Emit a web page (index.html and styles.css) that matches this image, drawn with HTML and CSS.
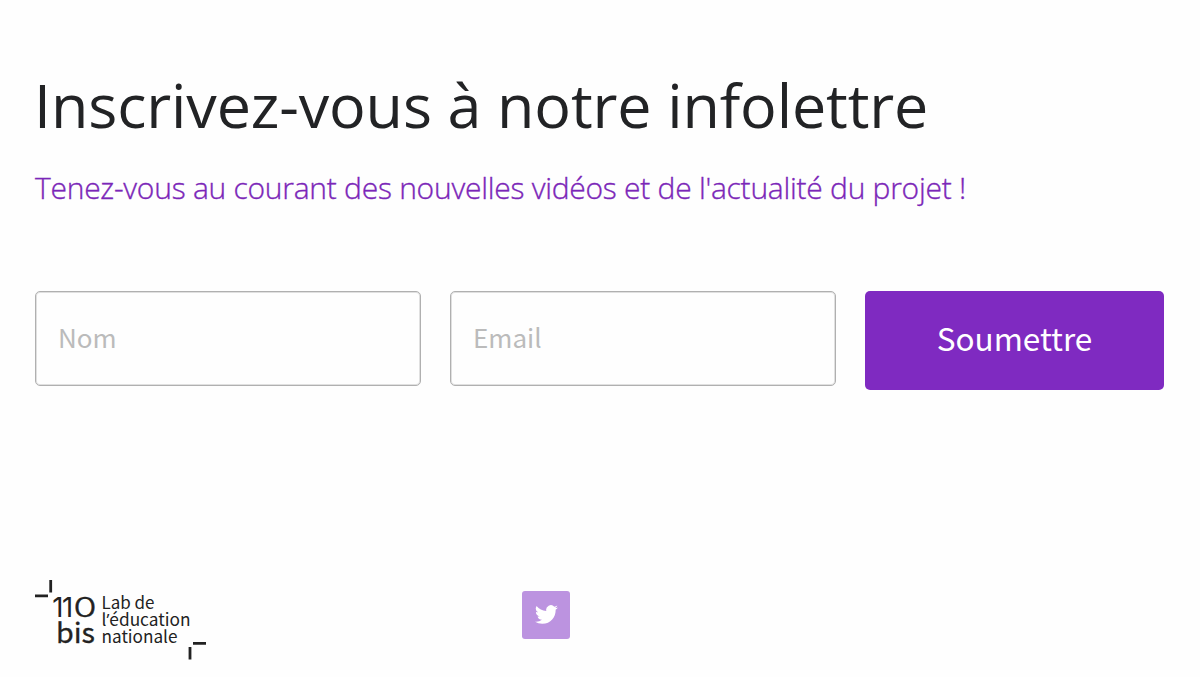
FILE: index.html
```html
<!DOCTYPE html>
<html lang="fr">

<head>
    <meta charset="UTF-8" />
    <title>Infolettre</title>
    <meta name="viewport" content="width=device-width, initial-scale=1.0" />
    <link rel="stylesheet" href="styles.css">
</head>

<body>
    <main class="newsletter">
        <h1>Inscrivez-vous à notre infolettre</h1>
        <p class="subtitle">Tenez-vous au courant des nouvelles vidéos et de l'actualité du projet&nbsp;!</p>

        <form class="signup-form">
            <input type="text" name="name" placeholder="Nom" aria-label="Nom" />
            <input type="email" name="email" placeholder="Email" aria-label="Email" />
            <button type="submit" class="submit-btn">Soumettre</button>
        </form>
    </main>

    <footer class="footer">
        <svg class="logo" viewBox="0 0 172 80" role="img" aria-label="110 bis, Lab de l’éducation nationale">
            <path d="M0 15.8h13M15.7 0v12.5M158 63.4h13M155 67v12.5" fill="none" stroke="#222" stroke-width="2.8" />
            <g class="logo-big">
                <text class="digits" x="17.3 27.1" y="37">11</text>
                <text class="digits zero" x="38.2" y="37" textLength="23.5" lengthAdjust="spacingAndGlyphs">0</text>
                <text x="21" y="62.5" textLength="39" lengthAdjust="spacingAndGlyphs">bis</text>
            </g>
            <g class="logo-small">
                <text x="66.5" y="28.5" textLength="53" lengthAdjust="spacingAndGlyphs">Lab de</text>
                <text x="66.5" y="45.5" textLength="89" lengthAdjust="spacingAndGlyphs">l<tspan class="apostrophe">’</tspan>éducation</text>
                <text x="66.5" y="62.5" textLength="76" lengthAdjust="spacingAndGlyphs">nationale</text>
            </g>
        </svg>
        <a class="social" href="#" aria-label="Twitter">
            <svg viewBox="0 0 24 24">
                <path d="M23.95 4.57a10 10 0 0 1-2.82.77 4.96 4.96 0 0 0 2.16-2.72c-.95.55-2 .95-3.13 1.18a4.92 4.92 0 0 0-8.38 4.48C7.69 8.1 4.07 6.13 1.64 3.16a4.92 4.92 0 0 0 1.52 6.57 4.9 4.9 0 0 1-2.23-.61v.06a4.92 4.92 0 0 0 3.95 4.83 5 5 0 0 1-2.21.08 4.94 4.94 0 0 0 4.6 3.42A9.87 9.87 0 0 1 0 19.54a14 14 0 0 0 7.55 2.21c9.05 0 14-7.5 14-13.98 0-.21 0-.42-.02-.63a9.94 9.94 0 0 0 2.46-2.55z" />
            </svg>
        </a>
    </footer>
</body>

</html>
```
FILE: styles.css
```css
body {
    margin: 0;
    padding: 67px 36px 0 35px;
    background: #fefefe;
    font-family: "Noto Sans CJK SC", sans-serif;
}

h1 {
    margin: 0 0 0 -1px;
    font-family: "Open Sans", sans-serif;
    font-size: 61px;
    font-weight: 400;
    line-height: 76px;
    letter-spacing: -0.13px;
    color: #222325;
    white-space: nowrap;
}

.subtitle {
    margin: 24px 0 0;
    font-family: "Open Sans", sans-serif;
    font-size: 30px;
    font-weight: 300;
    line-height: 42px;
    letter-spacing: -0.26px;
    color: #7b26b8;
    -webkit-text-stroke: 0.35px #7b26b8;
    white-space: nowrap;
}

.signup-form {
    display: flex;
    align-items: flex-start;
    gap: 29px;
    margin-top: 82px;
}

input {
    flex: 1;
    min-width: 0;
    height: 95px;
    padding: 0 23px 5px 22px;
    box-sizing: border-box;
    border: 1px solid #b0b0b0;
    border-radius: 5px;
    box-shadow: inset 0 0 0 1px #e0e0e0;
    background: #fefefe;
    font-family: inherit;
    font-size: 26px;
}

input::placeholder {
    color: #bbb;
    opacity: 1;
}

.submit-btn {
    width: 299px;
    height: 99px;
    padding: 0 0 8px;
    border: none;
    border-radius: 5px;
    background: #7f2ac1;
    color: white;
    font-family: inherit;
    font-size: 31.5px;
    cursor: pointer;
}

.footer {
    display: flex;
    align-items: flex-start;
    gap: 315px;
    margin-top: 190px;
}

.logo {
    width: 172px;
    height: 80px;
    fill: #222;
}

.logo-big {
    font-size: 28px;
}

.logo-big text {
    stroke: #222;
    stroke-width: 0.3px;
}

.logo-big .digits {
    font-family: Inter, sans-serif;
    font-size: 27.5px;
    stroke: none;
}

.logo-big .zero {
    font-weight: 300;
    stroke: #222;
}

.logo-small {
    font-size: 17px;
}

.apostrophe {
    font-family: "Open Sans", sans-serif;
}

.social {
    display: flex;
    align-items: center;
    justify-content: center;
    width: 48px;
    height: 48px;
    margin-top: 11px;
    border-radius: 3px;
    background: #bc93e0;
}

.social svg {
    width: 23px;
    height: 23px;
    margin-bottom: 2px;
    fill: white;
}
```
